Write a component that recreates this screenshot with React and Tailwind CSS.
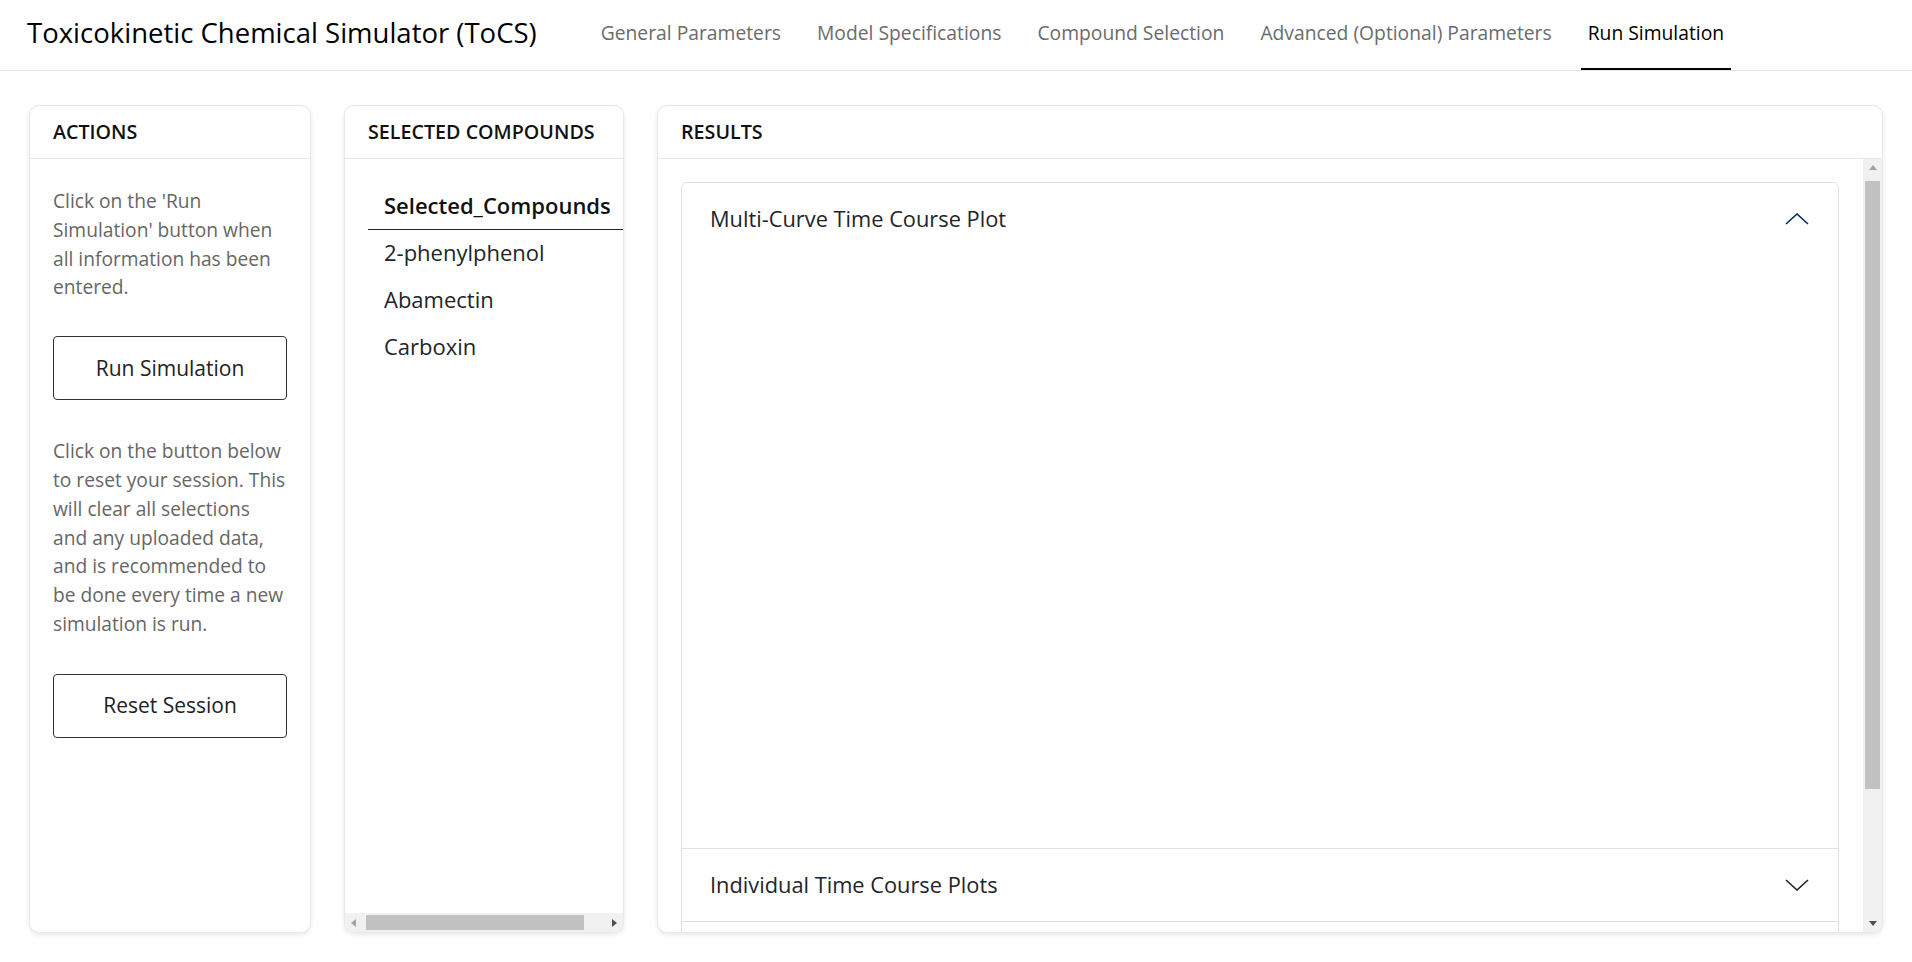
import React from 'react'

const tabs = [
  'General Parameters',
  'Model Specifications',
  'Compound Selection',
  'Advanced (Optional) Parameters',
  'Run Simulation'
]

const compounds = ['2-phenylphenol', 'Abamectin', 'Carboxin']

const Chevron = ({ up }) => (
  <svg width="24" height="12" viewBox="0 0 24 12" fill="none">
    <polyline
      points={up ? '1,11 12,1 23,11' : '1,1 12,11 23,1'}
      stroke={up ? '#052c65' : '#212529'}
      strokeWidth="1.6"
    />
  </svg>
)

// little triangles used by the painted scrollbars
const Arrow = ({ dir, color }) => {
  const pts = {
    up: '0,5 4,0 8,5',
    down: '0,0 8,0 4,5',
    left: '5,0 5,8 0,4',
    right: '0,0 0,8 5,4'
  }[dir]
  const vertical = dir === 'up' || dir === 'down'
  return (
    <svg width={vertical ? 8 : 5} height={vertical ? 5 : 8} viewBox={vertical ? '0 0 8 5' : '0 0 5 8'}>
      <polygon points={pts} fill={color} />
    </svg>
  )
}

const Card = ({ title, children, bodyClass }) => (
  <div className="flex h-[828px] flex-col overflow-hidden rounded-[10px] border border-[#e8e8e8] bg-white shadow-[0_2px_5px_rgba(0,0,0,0.09)]">
    <div className="flex h-[53px] shrink-0 items-center border-b border-[#e6e8eb] px-[23px] text-[19.7px] font-semibold text-[#111]">
      {title}
    </div>
    <div className={bodyClass}>{children}</div>
  </div>
)

const AccordionItem = ({ title, open, first, children }) => (
  <div className={first ? '' : 'border-t border-[#dee2e6]'}>
    <div className="flex h-[72px] items-center justify-between pl-[28px] pr-[29px] text-[21.8px] text-[#212529]">
      <span>{title}</span>
      <Chevron up={open} />
    </div>
    {open && children}
  </div>
)

export default function App() {
  return (
    <div className="min-h-screen bg-white font-['Open_Sans',sans-serif] text-[#212529]">
      <header className="flex h-[71px] items-stretch border-b border-[#e5e5e5] pl-[27px]">
        <div className="flex items-center pb-[4px] text-[27.5px] text-black">
          Toxicokinetic Chemical Simulator (ToCS)
        </div>
        <nav className="ml-[57px] flex gap-[22px]">
          {tabs.map((t, i) => (
            <a
              key={t}
              className={`flex items-center border-b-2 px-[7px] pb-[2px] text-[19.3px] ${i === tabs.length - 1 ? 'border-black text-black' : 'border-transparent text-[#6b6b6b]'}`}
            >
              {t}
            </a>
          ))}
        </nav>
      </header>

      <main className="grid grid-cols-[282px_280px_1fr] gap-[33px] px-[29px] pt-[34px]">
        {/* Actions */}
        <Card title="ACTIONS" bodyClass="flex-1 px-[23px] pt-[28px] text-[19.2px] leading-[28.8px] text-[#666]">
          <p>Click on the 'Run Simulation' button when all information has been entered.</p>
          <button className="mt-[34px] h-[64px] w-full rounded-[4px] border border-[#333] text-[21px] text-[#222]">
            Run Simulation
          </button>
          <p className="mt-[37px]">
            Click on the button below to reset your session. This will clear all selections and any uploaded data, and is recommended to be done every time a new simulation is run.
          </p>
          <button className="mt-[35px] h-[64px] w-full rounded-[4px] border border-[#333] text-[21px] text-[#222]">
            Reset Session
          </button>
        </Card>

        {/* Selected compounds */}
        <Card title="SELECTED COMPOUNDS" bodyClass="flex min-h-0 flex-1 flex-col">
          <div className="flex-1 overflow-hidden pl-[23px] pt-[23px]">
            <table className="w-[290px] text-left text-[22px]">
              <thead>
                <tr className="border-b border-[#212529]">
                  <th className="h-[47px] px-[16px] font-semibold text-[#111]">Selected_Compounds</th>
                </tr>
              </thead>
              <tbody>
                {compounds.map((c) => (
                  <tr key={c}>
                    <td className="h-[47px] px-[16px] text-[#212529]">{c}</td>
                  </tr>
                ))}
              </tbody>
            </table>
          </div>
          {/* horizontal scrollbar */}
          <div className="flex h-[19px] shrink-0 items-stretch bg-[#f1f1f1]">
            <div className="flex w-[15px] items-center justify-center pl-[2px]">
              <Arrow dir="left" color="#a3a3a3" />
            </div>
            <div className="flex-1 py-[2px] pl-[6px] pr-[24px]">
              <div className="h-full bg-[#c1c1c1]" />
            </div>
            <div className="flex w-[15px] items-center justify-center pr-[2px]">
              <Arrow dir="right" color="#505050" />
            </div>
          </div>
        </Card>

        {/* Results */}
        <Card title="RESULTS" bodyClass="flex min-h-0 flex-1">
          <div className="flex-1 overflow-hidden p-[23px] pr-[24px]">
            <div className="rounded-[6px] border border-[#dee2e6]">
              <AccordionItem title="Multi-Curve Time Course Plot" open first>
                <div className="h-[593px]" />
              </AccordionItem>
              <AccordionItem title="Individual Time Course Plots" />
              {/* next section starts below the fold */}
              <div className="h-[60px] border-t border-[#dee2e6]" />
            </div>
          </div>
          {/* vertical scrollbar */}
          <div className="flex w-[19px] shrink-0 flex-col bg-[#f1f1f1]">
            <div className="flex h-[15px] items-center justify-center pt-[2px]">
              <Arrow dir="up" color="#a3a3a3" />
            </div>
            <div className="flex-1 px-[2px] pb-[128px] pt-[7px]">
              <div className="h-full bg-[#c1c1c1]" />
            </div>
            <div className="flex h-[15px] items-center justify-center pb-[2px]">
              <Arrow dir="down" color="#505050" />
            </div>
          </div>
        </Card>
      </main>
    </div>
  )
}
